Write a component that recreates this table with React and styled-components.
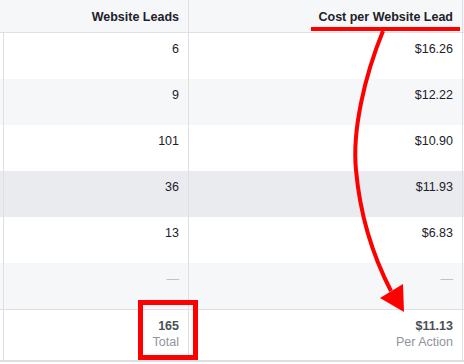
import React from 'react';
import styled, { createGlobalStyle } from 'styled-components';

const GlobalStyle = createGlobalStyle`
  html, body {
    margin: 0;
    padding: 0;
    background: #fff;
  }
  body {
    font-family: "Liberation Sans", Arial, sans-serif;
    -webkit-font-smoothing: antialiased;
  }
`;

const Wrapper = styled.div`
  position: relative;
  width: 464px;
  height: 364px;
  overflow: hidden;
  background-color: #fff;
`;

const Table = styled.div`
  display: flex;
  flex-direction: column;
`;

const Row = styled.div`
  display: flex;
  height: ${props => props.height || 46}px;
  background-color: ${props => props.bg || '#fff'};
  border-top: ${props => props.borderTop || 'none'};
  border-bottom: ${props => props.borderBottom || 'none'};
  box-sizing: border-box;
`;

const Stub = styled.div`
  width: 3px;
  flex: none;
`;

const Cell = styled.div`
  box-sizing: border-box;
  width: ${props => props.width}px;
  flex: none;
  display: flex;
  flex-direction: column;
  align-items: flex-end;
  padding: ${props => props.header ? '0 9px 0 0' : '8px 9px 0 0'};
  justify-content: ${props => props.header ? 'center' : 'flex-start'};
  border-left: ${props => props.noLeft ? 'none' : 'solid 1px #dddfe2'};
  border-right: ${props => props.right ? 'solid 1px #dddfe2' : 'none'};
  font-size: 12.5px;
  line-height: 16px;
  color: #1d2129;
`;

const HeadText = styled.span`
  font-weight: bold;
  color: #1d2129;
  padding-top: 1px;
`;

const Value = styled.span`
  color: #1d2129;
`;

const Dash = styled.span`
  color: #bec2c9;
`;

const TotalValue = styled.span`
  font-weight: bold;
  color: #4b4f56;
`;

const TotalLabel = styled.span`
  color: #90949c;
`;

const Overlay = styled.svg`
  position: absolute;
  left: 0;
  top: 0;
  pointer-events: none;
`;

const rows = [
  { leads: '6', cost: '$16.26', bg: '#fff' },
  { leads: '9', cost: '$12.22', bg: '#f6f7f9' },
  { leads: '101', cost: '$10.90', bg: '#fff' },
  { leads: '36', cost: '$11.93', bg: '#e9ebee' },
  { leads: '13', cost: '$6.83', bg: '#fff' },
  { leads: null, cost: null, bg: '#f6f7f9' }
];

const App = () => {
  return (
    <Wrapper>
      <GlobalStyle />
      <Table>
        <Row height={33} bg="#f6f7f9" borderBottom="solid 1px #dddfe2">
          <Stub />
          <Cell width={185} header noLeft>
            <HeadText>Website Leads</HeadText>
          </Cell>
          <Cell width={275} header right>
            <HeadText>Cost per Website Lead</HeadText>
          </Cell>
        </Row>
        {rows.map((r, i) => (
          <Row key={i} bg={r.bg}>
            <Stub />
            <Cell width={185}>
              {r.leads ? <Value>{r.leads}</Value> : <Dash>—</Dash>}
            </Cell>
            <Cell width={275} right>
              {r.cost ? <Value>{r.cost}</Value> : <Dash>—</Dash>}
            </Cell>
          </Row>
        ))}
        <Row height={53} borderTop="solid 1px #dddfe2" borderBottom="solid 2px #dddfe2">
          <Stub />
          <Cell width={185}>
            <TotalValue>165</TotalValue>
            <TotalLabel>Total</TotalLabel>
          </Cell>
          <Cell width={275} right>
            <TotalValue>$11.13</TotalValue>
            <TotalLabel>Per Action</TotalLabel>
          </Cell>
        </Row>
      </Table>
      <Overlay width="464" height="364" viewBox="0 0 464 364">
        <rect x="311" y="27" width="149" height="4" fill="#ff0000" />
        <rect x="140.5" y="302.5" width="55" height="55" fill="none" stroke="#ff0000" strokeWidth="5" />
        <path
          d="M383 31 C365 75 352 130 356 170 C360 215 374 258 391 291"
          fill="none"
          stroke="#ff0000"
          strokeWidth="4"
        />
        <polygon points="380,298 403,284 404,312" fill="#ff0000" />
      </Overlay>
    </Wrapper>
  );
};

export default App;
